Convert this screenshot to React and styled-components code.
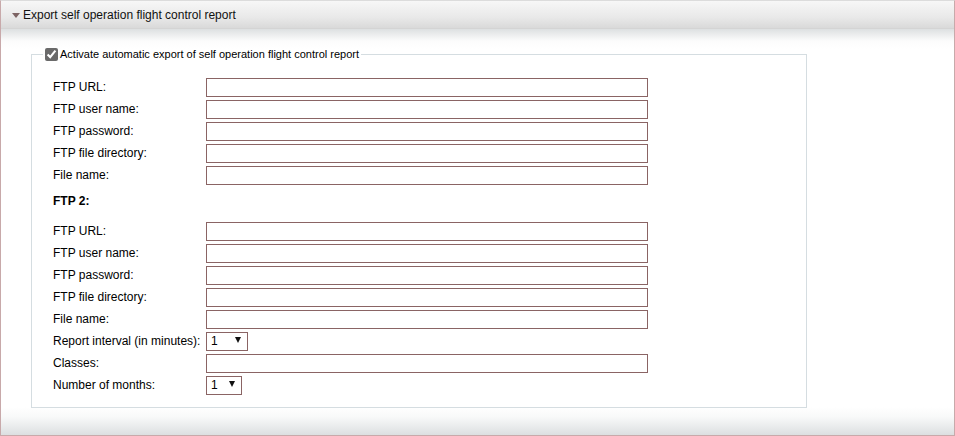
import React from "react"
import styled, { createGlobalStyle } from 'styled-components';

const GlobalStyle = createGlobalStyle`
  body {
    margin: 0;
    background: #fff;
    font-family: Arial, "Liberation Sans", sans-serif;
    font-size: 12px;
    color: #000;
  }
`;

const Panel = styled.div`
  width: 955px;
  height: 436px;
  box-sizing: border-box;
  border: 1px solid #c8a9aa;
  border-top-color: #dcdcdc;
  display: flex;
  flex-direction: column;
`;

const Header = styled.div`
  height: 27px;
  flex: none;
  display: flex;
  align-items: center;
  padding-left: 11px;
  background: linear-gradient(#f7f7f7, #e9e9e9 60%, #d9d9d9);
  border-bottom: 1px solid #d4d4d4;
  font-size: 12px;
  color: #111;
`;

const Arrow = styled.span`
  width: 0;
  height: 0;
  border-left: 4px solid transparent;
  border-right: 4px solid transparent;
  border-top: 5px solid #7d6464;
  margin-right: 3px;
  margin-top: 1px;
`;

const Body = styled.div`
  flex: 1;
  padding: 17px 0 0 30px;
  background: linear-gradient(#dde0e1, #fcfcfc 12px, #fff 20px, #fff calc(100% - 28px), #f8f9f9 calc(100% - 18px), #dcdfe1);
`;

const Fieldset = styled.fieldset`
  width: 776px;
  box-sizing: border-box;
  margin: 0;
  border: 1px solid #d5dde1;
  padding: 14px 21px 11px 21px;
`;

const Legend = styled.legend`
  display: flex;
  align-items: center;
  padding: 0 2px;
  margin-left: -10px;
  font-size: 11px;
  height: 16px;
`;

const Check = styled.input`
  width: 13px;
  height: 13px;
  margin: 0 2px 0 0;
  accent-color: #6a6a6a;
`;

const Row = styled.div`
  display: flex;
  align-items: center;
  height: 22px;
`;

const Label = styled.label`
  width: 153px;
  flex: none;
  font-size: 12px;
`;

const TextBox = styled.input`
  width: 442px;
  height: 19px;
  box-sizing: border-box;
  margin: 0;
  border: 1px solid #8a6464;
  padding: 1px 3px;
  font-size: 12px;
  font-family: inherit;
  outline: none;
`;

const Dropdown = styled.div`
  width: ${p => p.$w}px;
  height: 19px;
  box-sizing: border-box;
  border: 1px solid #8a6464;
  display: flex;
  align-items: center;
  justify-content: space-between;
  padding: 0 6px 0 4px;
  font-size: 12px;
`;

const DropArrow = styled.span`
  width: 0;
  height: 0;
  border-left: 3.5px solid transparent;
  border-right: 3.5px solid transparent;
  border-top: 6px solid #111;
  margin-top: -2px;
`;

const SubTitle = styled.div`
  font-weight: bold;
  font-size: 12px;
  height: 34px;
  line-height: 26px;
  padding-top: 2px;
  box-sizing: border-box;
`;

const ftpFields = ["FTP URL:", "FTP user name:", "FTP password:", "FTP file directory:", "File name:"];

const Field = ({ label }) => (
  <Row>
    <Label>{label}</Label>
    <TextBox type="text" />
  </Row>
);

const App = () => (
  <>
    <GlobalStyle />
    <Panel>
      <Header>
        <Arrow />
        Export self operation flight control report
      </Header>
      <Body>
        <Fieldset>
          <Legend>
            <Check type="checkbox" defaultChecked />
            Activate automatic export of self operation flight control report
          </Legend>
          {ftpFields.map(f => <Field key={"a" + f} label={f} />)}
          <SubTitle>FTP 2:</SubTitle>
          {ftpFields.map(f => <Field key={"b" + f} label={f} />)}
          <Row>
            <Label>Report interval (in minutes):</Label>
            <Dropdown $w={42}>1<DropArrow /></Dropdown>
          </Row>
          <Field label="Classes:" />
          <Row>
            <Label>Number of months:</Label>
            <Dropdown $w={36}>1<DropArrow /></Dropdown>
          </Row>
        </Fieldset>
      </Body>
    </Panel>
  </>
);

export default App
